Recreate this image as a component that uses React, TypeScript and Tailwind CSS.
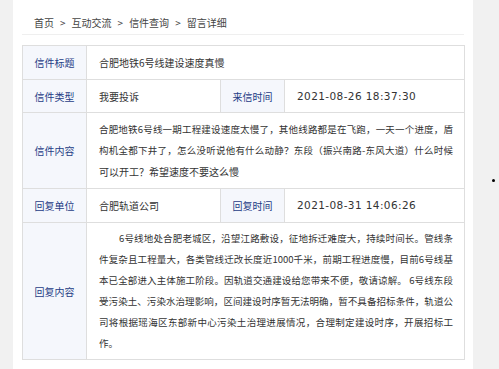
import React from "react";

const label = "bg-[#f5f7fc] text-[#1f3d86] text-center align-middle border border-[#dedede]";
const val = "bg-white text-[#333] align-middle border border-[#dedede] px-3";
const line = "block w-[354px] whitespace-nowrap text-justify [text-align-last:justify]";
const last = "block w-[354px] whitespace-nowrap";
const date = "text-[10.5px] tracking-[0.4px] [font-family:'DejaVu_Sans',sans-serif]";

export default function App() {
  return (
    <div className="relative w-[499px] h-[369px] bg-[#f1f1f1] overflow-hidden text-[10px] [font-family:'Noto_Sans_CJK_SC',sans-serif]">
      <div className="ml-[13px] w-[460px] h-full bg-white px-[9px]">
        <div className="h-[35px] flex items-center pl-3 pt-[11px] text-[#444] border-b border-[#efefef] leading-none">
          <span>首页</span>
          <span className="mx-[6px]">&gt;</span>
          <span>互动交流</span>
          <span className="mx-[6px]">&gt;</span>
          <span>信件查询</span>
          <span className="mx-[6px]">&gt;</span>
          <span>留言详细</span>
        </div>
        <table className="mt-[10px] w-[442px] border-collapse table-fixed">
          <colgroup>
            <col className="w-[64px]" />
            <col className="w-[134px]" />
            <col className="w-[64px]" />
            <col className="w-[180px]" />
          </colgroup>
          <tbody>
            <tr className="h-[34px]">
              <td className={label}>信件标题</td>
              <td className={val} colSpan={3}>合肥地铁6号线建设速度真慢</td>
            </tr>
            <tr className="h-[33px]">
              <td className={label}>信件类型</td>
              <td className={val}>我要投诉</td>
              <td className={label}>来信时间</td>
              <td className={val}><span className={date}>2021-08-26 18:37:30</span></td>
            </tr>
            <tr className="h-[76px]">
              <td className={label}>信件内容</td>
              <td className={val + " leading-[21px] text-[9.5px]"} colSpan={3}>
                <span className={line}>合肥地铁6号线一期工程建设速度太慢了，其他线路都是在飞跑，一天一个进度，盾</span>
                <span className={line}>构机全都下井了，怎么没听说他有什么动静？东段（振兴南路-东风大道）什么时候</span>
                <span className={last + " text-[10px]"}>可以开工？希望速度不要这么慢</span>
              </td>
            </tr>
            <tr className="h-[34px]">
              <td className={label}>回复单位</td>
              <td className={val}>合肥轨道公司</td>
              <td className={label}>回复时间</td>
              <td className={val}><span className={date}>2021-08-31 14:06:26</span></td>
            </tr>
            <tr className="h-[137px]">
              <td className={label}>回复内容</td>
              <td className={val + " leading-[21px] text-[9.5px]"} colSpan={3}>
                <span className={line + " pl-5"}>6号线地处合肥老城区，沿望江路敷设，征地拆迁难度大，持续时间长。管线条</span>
                <span className={line}>件复杂且工程量大，各类管线迁改长度近1000千米，前期工程进度慢，目前6号线基</span>
                <span className={line}>本已全部进入主体施工阶段。因轨道交通建设给您带来不便，敬请谅解。 6号线东段</span>
                <span className={line}>受污染土、污染水治理影响，区间建设时序暂无法明确，暂不具备招标条件，轨道公</span>
                <span className={line}>司将根据瑶海区东部新中心污染土治理进展情况，合理制定建设时序，开展招标工</span>
                <span className={last}>作。</span>
              </td>
            </tr>
          </tbody>
        </table>
      </div>
      <div className="absolute left-[492px] top-[179px] w-[3px] h-[3px] rounded-full bg-black" />
    </div>
  );
}
